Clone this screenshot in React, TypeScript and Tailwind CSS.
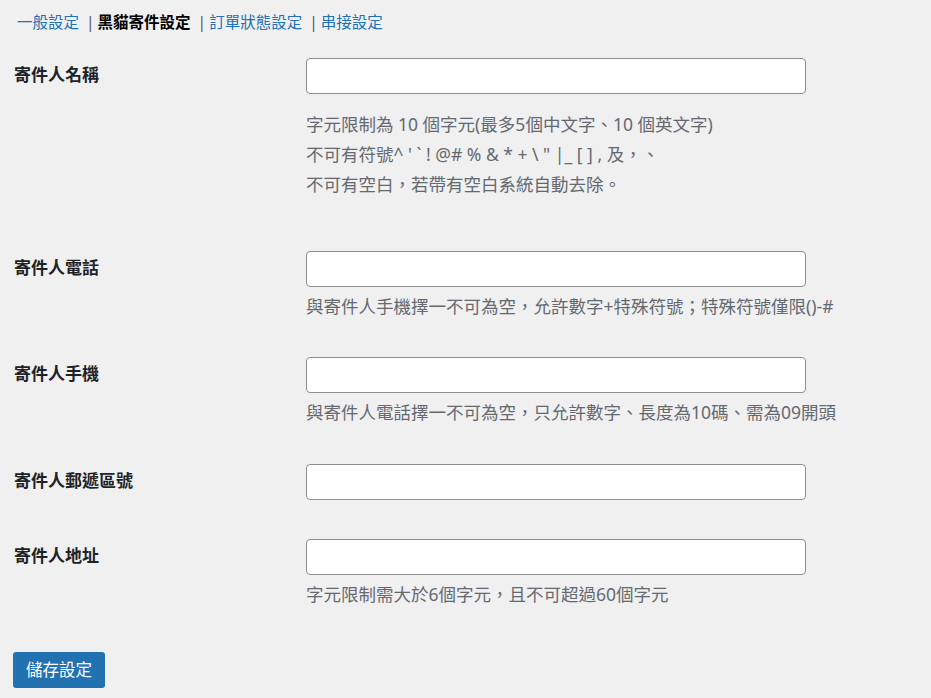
import React from "react";

const font = "font-['Noto_Sans','Noto_Sans_CJK_TC',sans-serif]";

type Field = {
  label: string;
  lines?: string[];
  descClass?: string;
  rowClass: string;
};

const fields: Field[] = [
  {
    label: "寄件人名稱",
    lines: [
      "字元限制為 10 個字元(最多5個中文字、10 個英文字)",
      "不可有符號^ ' ` ! @# % & * + \\ \" |_ [ ] , 及，、",
      "不可有空白，若帶有空白系統自動去除。",
    ],
    descClass: "mt-[15px] leading-[30px]",
    rowClass: "mt-[26px]",
  },
  {
    label: "寄件人電話",
    lines: ["與寄件人手機擇一不可為空，允許數字+特殊符號；特殊符號僅限()-#"],
    descClass: "mt-[8px] leading-[22px]",
    rowClass: "mt-[52px]",
  },
  {
    label: "寄件人手機",
    lines: ["與寄件人電話擇一不可為空，只允許數字、長度為10碼、需為09開頭"],
    descClass: "mt-[8px] leading-[22px]",
    rowClass: "mt-[40px]",
  },
  { label: "寄件人郵遞區號", rowClass: "mt-[41px]" },
  {
    label: "寄件人地址",
    lines: ["字元限制需大於6個字元，且不可超過60個字元"],
    descClass: "mt-[8px] leading-[22px]",
    rowClass: "mt-[39px]",
  },
];

const tabs = ["一般設定", "黑貓寄件設定", "訂單狀態設定", "串接設定"];

export default function App() {
  return (
    <div className={`min-h-screen bg-[#f0f0f1] px-[14px] pb-[10px] text-[#1d2327] ${font}`}>
      <div className="flex items-center pl-[3px] pt-[12px] text-[15.5px] leading-[20px]">
        {tabs.map((t, i) => (
          <span key={t} className="flex items-center">
            {i > 0 && <span className="ml-[7px] mr-[3px] text-[#50575e]">|</span>}
            {i === 1 ? (
              <span className="font-semibold text-black">{t}</span>
            ) : (
              <a className="text-[#2271b1]">{t}</a>
            )}
          </span>
        ))}
      </div>

      {fields.map((f) => (
        <div key={f.label} className={`flex ${f.rowClass}`}>
          <div className="w-[292px] shrink-0 pt-[7px] text-[17px] font-semibold leading-[20px]">
            {f.label}
          </div>
          <div className="w-[500px]">
            <input
              type="text"
              className="block h-[36px] w-[500px] rounded-[4px] border border-[#8c8f94] bg-white px-2 outline-none"
            />
            {f.lines && (
              <p className={`text-[17.5px] text-[#646970] ${f.descClass}`}>
                {f.lines.map((l, i) => (
                  <span key={i} className="block whitespace-nowrap">
                    {l}
                  </span>
                ))}
              </p>
            )}
          </div>
        </div>
      ))}

      <button className="mt-[47px] -ml-px h-[36px] w-[92px] rounded-[3px] bg-[#2271b1] text-[16.5px] text-white">
        儲存設定
      </button>
    </div>
  );
}
